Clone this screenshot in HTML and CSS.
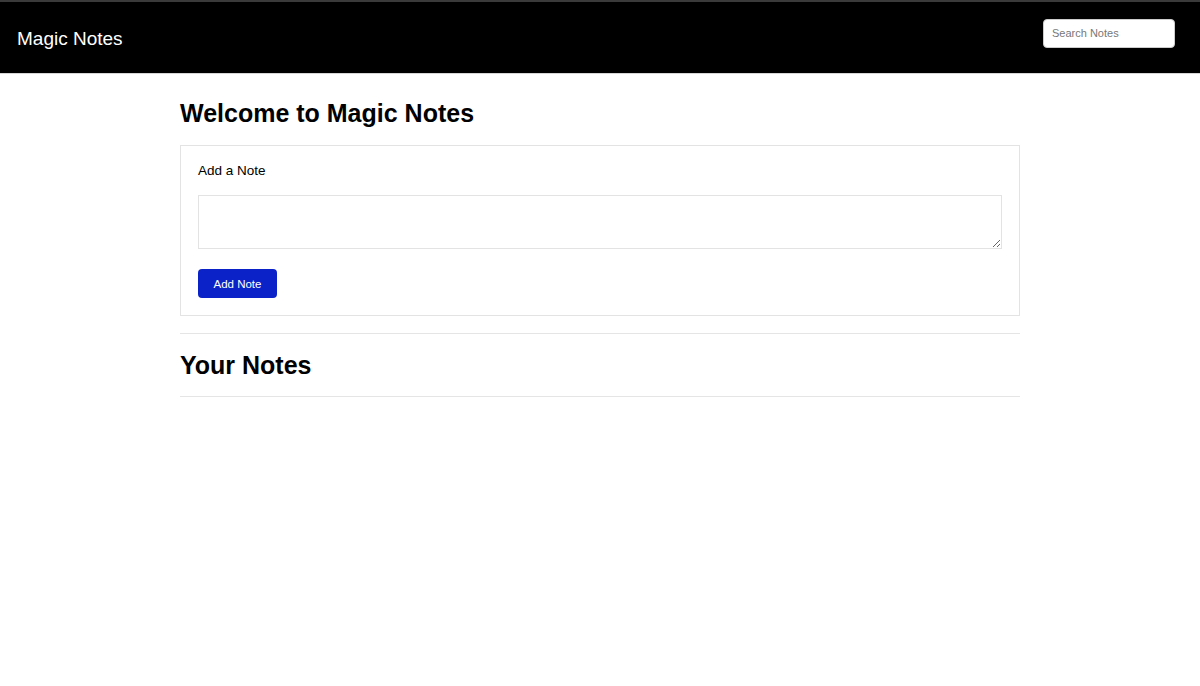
FILE: index.html
```html
<!DOCTYPE html>
<html lang="en">
<head>
<meta charset="utf-8">
<title>Magic Notes</title>
<link rel="stylesheet" href="styles.css">
</head>
<body>
<div class="topstrip"></div>
<nav class="navbar">
  <a class="brand" href="#">Magic Notes</a>
  <input class="search" type="search" placeholder="Search Notes">
</nav>
<main class="container">
  <h1 class="title">Welcome to Magic Notes</h1>
  <section class="card">
    <h5 class="card-title">Add a Note</h5>
    <textarea class="note-input"></textarea>
    <button class="btn">Add Note</button>
  </section>
  <hr class="rule">
  <h1 class="title notes-title">Your Notes</h1>
  <hr class="rule rule-bottom">
  <div class="notes"></div>
</main>
</body>
</html>
```
FILE: styles.css
```css
* { box-sizing: border-box; }
html, body { margin: 0; padding: 0; }
body {
  font-family: "Liberation Sans", Arial, sans-serif;
  color: #000;
  background: #fff;
}
.topstrip { height: 2px; background: #3a3a3a; }
.navbar {
  height: 72px;
  background: #000;
  border-bottom: 1px solid #d6d6d6;
  display: flex;
  align-items: center;
  justify-content: space-between;
  padding: 0 25px 0 17px;
}
.brand {
  color: #fff;
  text-decoration: none;
  font-size: 19px;
  margin-top: 3px;
}
.search {
  width: 132px;
  height: 29px;
  border: 1px solid #ccc;
  border-radius: 4px;
  padding: 0 8px;
  font-family: "Liberation Sans", Arial, sans-serif;
  font-size: 11px;
  margin-top: -9px;
}
.search::placeholder { color: #777; }
.container {
  width: 840px;
  margin: 0 auto;
  padding-top: 25px;
}
.title {
  font-size: 25px;
  font-weight: bold;
  margin: 0 0 17px;
  line-height: 29px;
}
.card {
  border: 1px solid #e3e3e3;
  padding: 16px 17px 17px;
  display: flex;
  flex-direction: column;
  align-items: flex-start;
}
.card-title {
  font-size: 13.5px;
  font-weight: normal;
  margin: 0 0 15px;
  line-height: 18px;
}
.note-input {
  width: 100%;
  height: 54px;
  border: 1px solid #e3e3e3;
  resize: vertical;
  margin: 0 0 20px;
  font-family: inherit;
}
.btn {
  width: 79px;
  height: 29px;
  background: #0b22c9;
  color: #fff;
  border: none;
  border-radius: 4px;
  font-family: "Liberation Sans", Arial, sans-serif;
  font-size: 11.5px;
}
.rule {
  border: 0;
  border-top: 1px solid #e5e5e5;
  margin: 17px 0 17px;
}
.notes-title { margin: 0; }
.rule-bottom { margin-top: 16px; }
```
